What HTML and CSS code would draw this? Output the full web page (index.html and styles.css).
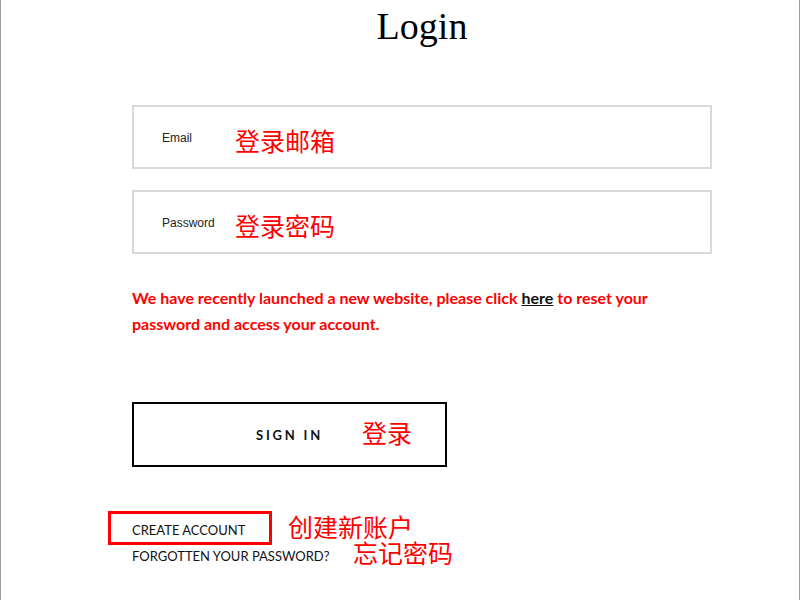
FILE: index.html
```html
<!DOCTYPE html>
<html lang="zh">
<head>
    <meta charset="UTF-8">
    <meta name="viewport" content="width=device-width, initial-scale=1.0">
    <title>Login</title>
    <link rel="stylesheet" href="styles.css">
</head>
<body>
    <div class="frame">
        <div class="login">
            <h1 class="login-title">Login</h1>

            <!-- Các ô nhập -->
            <div class="field">
                <span class="field-label">Email</span>
                <span class="note">登录邮箱</span>
            </div>
            <div class="field">
                <span class="field-label">Password</span>
                <span class="note">登录密码</span>
            </div>

            <p class="notice">We have recently launched a new website, please click <a href="#">here</a> to reset your password and access your account.</p>

            <button class="signin">
                SIGN IN
                <span class="note note-btn">登录</span>
            </button>

            <div class="links">
                <div class="link-row">
                    <a class="link link-boxed" href="#">CREATE ACCOUNT</a>
                    <span class="note note-create">创建新账户</span>
                </div>
                <div class="link-row">
                    <a class="link" href="#">FORGOTTEN YOUR PASSWORD?</a>
                    <span class="note note-forgot">忘记密码</span>
                </div>
            </div>
        </div>
    </div>
</body>
</html>
```

FILE: styles.css
```css
body {
    margin: 0;
    padding: 0;
    background: #fff;
}

.frame {
    width: 798px;
    height: 600px;
    border-left: 1px solid #a0a0a0;
    border-right: 1px solid #a0a0a0;
    overflow: hidden;
}

.login {
    width: 580px;
    margin-left: 131px;
}

.login-title {
    margin: 0;
    padding-top: 3px;
    height: 102px;
    text-align: center;
    font-family: "Liberation Serif", serif;
    font-weight: normal;
    font-size: 38px;
    line-height: 46px;
    color: #000;
}

/* Ô nhập */
.field {
    box-sizing: border-box;
    height: 64px;
    border: 2px solid #d9d9d9;
    margin-bottom: 21px;
    display: flex;
    align-items: center;
    padding-left: 28px;
}

.field-label {
    width: 73px;
    font-family: "Liberation Sans", Arial, sans-serif;
    font-size: 12px;
    color: #222;
    position: relative;
    top: 1px;
}

.note {
    font-family: "Noto Sans CJK SC", sans-serif;
    font-weight: normal;
    font-size: 25px;
    line-height: 25px;
    color: #ff0000;
}

.field .note {
    position: relative;
    top: 3px;
}

.notice {
    margin: 0;
    width: 530px;
    padding-top: 10px;
    height: 117px;
    font-family: Lato, sans-serif;
    font-weight: bold;
    font-size: 16px;
    line-height: 26px;
    color: #ff0000;
}

.notice a {
    color: #111;
}

/* Nút đăng nhập */
.signin {
    position: relative;
    box-sizing: border-box;
    width: 315px;
    height: 65px;
    border: 2px solid #000;
    background: #fff;
    font-family: Lato, sans-serif;
    font-weight: bold;
    font-size: 13px;
    letter-spacing: 2.8px;
    color: #111;
    padding: 0;
    display: block;
}

.note-btn {
    position: absolute;
    left: 228px;
    top: 16px;
    letter-spacing: 0;
}

.links {
    margin-top: 50px;
}

.link-row {
    position: relative;
    height: 26px;
    display: flex;
    align-items: center;
}

.link {
    font-family: Lato, sans-serif;
    font-size: 13px;
    color: #111;
    text-decoration: none;
}

/* Khung đỏ chú thích */
.link-boxed {
    position: relative;
}

.link-boxed:before {
    content: '';
    position: absolute;
    left: -24px;
    top: -11px;
    width: 158px;
    height: 28px;
    border: 3px solid #ff0000;
}

.note-create {
    position: absolute;
    left: 156px;
    top: -3px;
}

.note-forgot {
    position: absolute;
    left: 221px;
    top: -3px;
}
```
